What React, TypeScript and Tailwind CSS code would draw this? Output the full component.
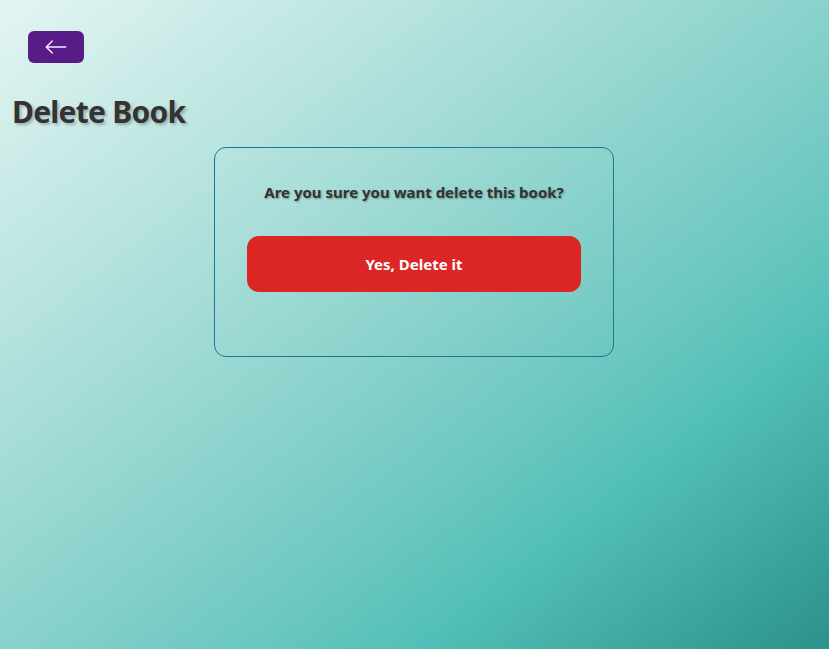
import { BsArrowLeft } from 'react-icons/bs';

function BackButton() {
  return (
    <button
      type="button"
      className="flex items-center justify-center w-14 h-8 rounded-md bg-[#571c87] text-[#f3e8ff]"
    >
      <BsArrowLeft className="text-2xl" />
    </button>
  );
}

export default function App() {
  return (
    <div
      className="min-h-screen w-full p-3 bg-linear-to-br from-[#e4f5f3] via-[#52c0b8] via-75% to-[#2c918b] text-[#333]"
      style={{ fontFamily: '"Noto Sans", "Open Sans", sans-serif' }}
    >
      <div className="ml-4 mt-[19px]">
        <BackButton />
      </div>

      <h1 className="mt-[31px] text-3xl font-bold tracking-tight [text-shadow:2px_2px_3px_rgba(0,0,0,0.25)]">
        Delete Book
      </h1>

      <div className="ml-[202px] mt-[17px] w-[400px] flex flex-col items-center p-8 border border-[#1a7795] rounded-xl">
        <h3 className="text-[15px] leading-6 font-bold [text-shadow:1px_1px_2px_rgba(0,0,0,0.3)]">
          Are you sure you want delete this book?
        </h3>
        <button
          type="button"
          className="my-8 w-full p-4 rounded-xl bg-[#dc2626] text-white text-[15px] leading-6 font-bold"
        >
          Yes, Delete it
        </button>
      </div>
    </div>
  );
}
